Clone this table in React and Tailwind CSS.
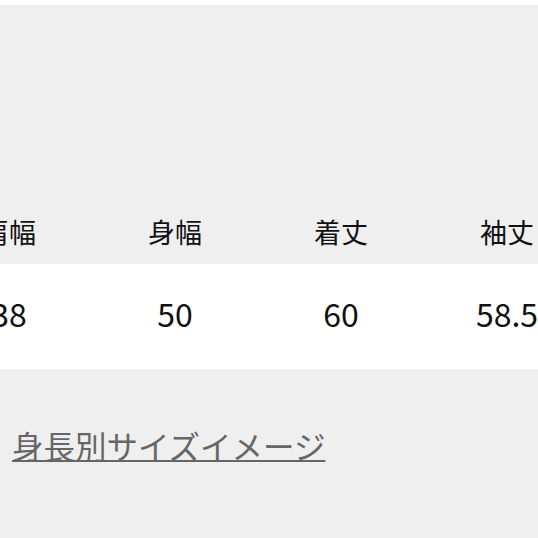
const headers = ['肩幅', '身幅', '着丈', '袖丈'];
const values = ['38', '50', '60', '58.5'];

const App = () => {
  return (
    <div
      className="w-[538px] h-[538px] overflow-hidden bg-[#efefef] border-t-[5px] border-white"
      style={{ fontFamily: '"Noto Sans CJK JP", "Noto Sans", sans-serif' }}
    >
      <div className="mt-[195px] ml-[-74px] w-[700px]">
        <div className="flex h-[64px] items-center text-[27px] text-[#111]">
          {headers.map((h) => (
            <div key={h} className="w-[166px] shrink-0 text-center">
              {h}
            </div>
          ))}
        </div>
        <div className="flex h-[105px] items-center bg-white pb-[7px] text-[32px] text-[#111]">
          {values.map((v) => (
            <div key={v} className="w-[166px] shrink-0 text-center">
              {v}
            </div>
          ))}
        </div>
      </div>
      <div className="mt-[57px] ml-[12px]">
        <a className="text-[31.5px] leading-[38px] text-[#666] underline decoration-2 underline-offset-[1px]">
          身長別サイズイメージ
        </a>
      </div>
    </div>
  );
};

export default App;
